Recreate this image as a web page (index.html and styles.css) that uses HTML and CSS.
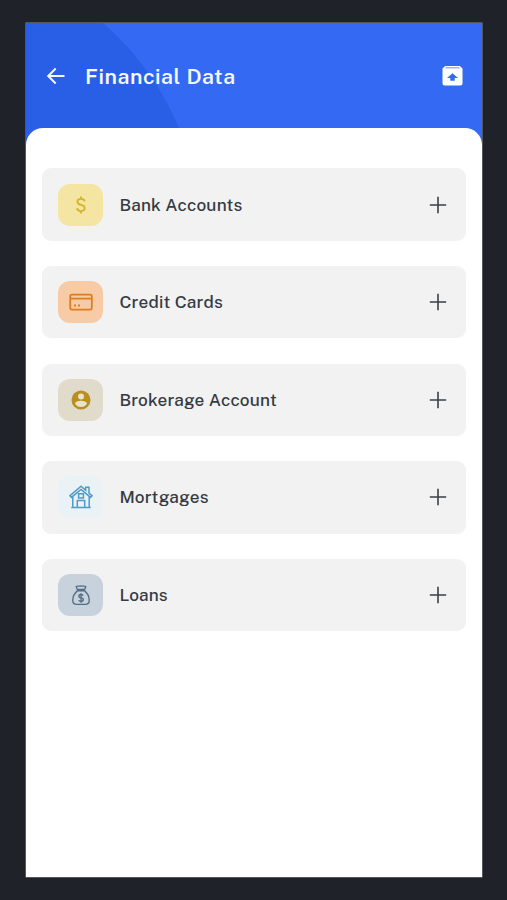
FILE: index.html
```html
<!DOCTYPE html>
<html lang="en">
<head>
<meta charset="utf-8">
<title>Financial Data</title>
<link rel="stylesheet" href="styles.css">
</head>
<body>
<main class="screen">
  <header class="header">
    <svg class="back" viewBox="0 0 20 20"><path d="M18.500 10H2.500M9.700 2.500 2.200 10l7.500 7.500"/></svg>
    <h1 class="title">Financial Data</h1>
    <svg class="archive" viewBox="0 0 21 20"><path fill-rule="evenodd" d="M3.200 0h14.600l2.700 2.500v15a2 2 0 0 1-2 2h-16a2 2 0 0 1-2-2v-15zM3.800 1.500 3.200 2.200h14.600l-.6-.7zM10.500 7.300 5 12h3.300v2.800h4.400V12H16z"/></svg>
  </header>
  <section class="sheet">
    <div class="card">
      <span class="tile bank"><svg viewBox="0 0 24 24"><path d="M16 8.100C15.700 6.300 14.200 5.400 12 5.400c-2.300 0-3.900 1.100-3.900 3 0 4.800 8 2.300 8 7 0 2-1.700 3.200-4.100 3.200-2.500 0-4.100-1.100-4.300-3.200M12 2.800v2.800M12 18.400v2.800"/></svg></span>
      <span class="name">Bank Accounts</span>
      <svg class="plus" viewBox="0 0 18 18"><path d="M9 .8v16.400M.8 9h16.400"/></svg>
    </div>
    <div class="card">
      <span class="tile credit"><svg viewBox="0 0 24 24"><rect x="1.200" y="4.600" width="21.600" height="15" rx="1.800"/><path d="M1 8.700h22M5 15.500h2M9 15.500h2"/></svg></span>
      <span class="name">Credit Cards</span>
      <svg class="plus" viewBox="0 0 18 18"><path d="M9 .8v16.400M.8 9h16.400"/></svg>
    </div>
    <div class="card">
      <span class="tile broker"><svg viewBox="0 0 24 24"><circle class="solid" cx="12" cy="12" r="9.500"/><circle class="cut" cx="12" cy="8.600" r="3"/><path class="cut" d="M6 15.700c.3-2.200 4-3 6-3s5.700.8 6 3c-1.300 2-3.500 3.300-6 3.300s-4.700-1.300-6-3.300z"/></svg></span>
      <span class="name">Brokerage Account</span>
      <svg class="plus" viewBox="0 0 18 18"><path d="M9 .8v16.400M.8 9h16.400"/></svg>
    </div>
    <div class="card">
      <span class="tile mortgage"><svg viewBox="0 0 24 24"><path d="M12 1.300 1 10.700l1.400 1.700L12 4.400l9.600 8 1.400-1.700-3-2.600V2.300h-3.300v3zM3.800 11.600v10.900h16.400V11.600M8.300 22.500v-7h7.400v7M9.600 8.700h4.800V13H9.600zM2.300 22.500h19.400"/></svg></span>
      <span class="name">Mortgages</span>
      <svg class="plus" viewBox="0 0 18 18"><path d="M9 .8v16.400M.8 9h16.400"/></svg>
    </div>
    <div class="card">
      <span class="tile loan"><svg viewBox="0 0 24 24"><path d="m8 6-1.200-3.200c1.500-1.200 3 .1 5.200-.700 2.200.8 3.700-.5 5.200.700L16 6zM8 7.500h8M8 7.500C5 10 3 14.500 3 18c0 3 1.800 4.200 4.500 4.200h9c2.700 0 4.500-1.200 4.500-4.200 0-3.500-2-8-5-10.500M14.300 12.700c-.4-.8-1.200-1.200-2.300-1.200-3 0-3.200 3.400 0 3.600 3.500.2 3.200 3.900 0 3.900-1.300 0-2.200-.5-2.500-1.400M12 10.200v10.200"/></svg></span>
      <span class="name">Loans</span>
      <svg class="plus" viewBox="0 0 18 18"><path d="M9 .8v16.400M.8 9h16.400"/></svg>
    </div>
  </section>
</main>
</body>
</html>
```
FILE: styles.css
```css
* { box-sizing: border-box; }
body {
  margin: 0;
  height: 900px;
  padding: 23.400px 25px 22.500px 25.600px;
  background: #1f2229;
  font-family: "Public Sans", "Libre Franklin", Inter, sans-serif;
  overflow: hidden;
}
svg { display: block; fill: none; stroke: currentColor; }
.screen {
  display: flex;
  flex-direction: column;
  height: 854px;
  background: radial-gradient(circle 285px at -110px 215px, #285fe6 284.500px, #346af3 285.500px);
  box-shadow: 0 0 0 .5px #8b8f94;
}
.header {
  display: flex;
  align-items: center;
  height: 104.400px;
  padding: 1px 19px 0 20px;
  color: #f4f8ff;
}
.back { width: 20px; height: 20px; stroke-width: 2; }
.title {
  flex: 1;
  margin: 0 0 0 19.400px;
  padding-top: 1px;
  font-size: 21.300px;
  font-weight: 600;
  line-height: 28px;
  letter-spacing: .55px;
}
.archive { width: 21px; height: 20px; fill: #fff; stroke: none; }
.sheet {
  flex: 1;
  display: flex;
  flex-direction: column;
  gap: 25.100px;
  padding: 40.600px 16.400px 0;
  background: #fff;
  border-radius: 17px 17px 0 0;
}
.card {
  display: flex;
  align-items: center;
  height: 72.500px;
  padding: 0 19px 0 16px;
  border-radius: 9px;
  background: #f2f2f2;
}
.tile {
  display: grid;
  place-items: center;
  width: 45px;
  height: 42px;
  border-radius: 12px;
}
.tile svg { width: 24px; height: 24px; margin-left: 1px; stroke-width: 1.500; }
.bank { background: #f4e5a3; color: #d3b52a; }
.tile.bank svg { width: 22px; height: 22px; stroke-width: 2; }
.credit { background: #f6cba5; color: #e07d20; }
.tile.credit svg { stroke-width: 1.800; }
.broker { background: #e0dbca; color: #b98f22; }
.tile .solid { fill: currentColor; stroke: none; }
.tile .cut { fill: #e9e3cd; stroke: none; }
.mortgage { background: #eaf2f6; color: #4d9bc8; }
.loan { background: #c8d2dc; color: #526f88; }
.tile.loan svg { width: 22px; height: 22px; }
.name {
  flex: 1;
  margin-left: 16.400px;
  color: #353b42;
  font-size: 17.200px;
  font-weight: 480;
  line-height: 24px;
  letter-spacing: .18px;
}
.plus { width: 18px; height: 18px; color: #3b4046; stroke-width: 1.600; }
```
